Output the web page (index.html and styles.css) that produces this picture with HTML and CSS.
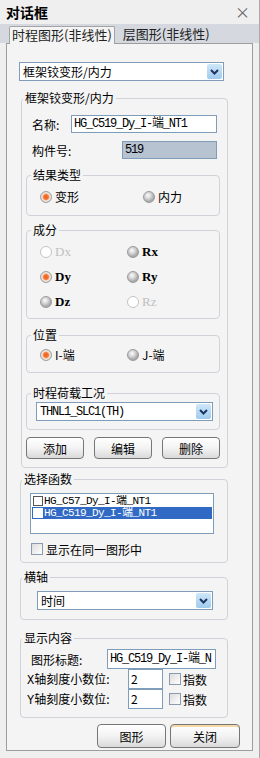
FILE: index.html
```html
<!DOCTYPE html>
<html lang="zh-CN">
<head>
<meta charset="UTF-8">
<meta name="viewport" content="width=device-width,initial-scale=1.0">
<title>对话框</title>
<link rel="stylesheet" href="styles.css">
</head>
<body>
<div class="dlg">
<div class="titlebar"><span class="title">对话框</span><span class="close">×</span></div>
<div class="tabs"><span class="tab active">时程图形(非线性)</span><span class="tab">层图形(非线性)</span></div>
<div class="panel">
<div class="combo main-combo"><span>框架铰变形/内力</span><span class="combo-btn"><svg width="9" height="6" viewBox="0 0 9 6"><path d="M1 1l3.5 3.5L8 1" fill="none" stroke="#1d3560" stroke-width="2"/></svg></span></div>

<fieldset class="group outer">
<legend>框架铰变形/内力</legend>
<div class="field"><label class="lbl name-lbl">名称:</label><span class="edit mono name-edit">HG_C519_Dy_I-端_NT1</span></div>
<div class="field id-field"><label class="lbl id-lbl">构件号:</label><span class="edit mono id-edit">519</span></div>

<fieldset class="group inner result">
<legend>结果类型</legend>
<div class="radios cols-wide">
<span class="opt"><i class="radio on"></i>变形</span>
<span class="opt"><i class="radio"></i>内力</span>
</div>
</fieldset>

<fieldset class="group inner comp">
<legend>成分</legend>
<div class="radios cols">
<span class="opt comp-txt off"><i class="radio dis"></i>Dx</span>
<span class="opt comp-txt"><i class="radio"></i>Rx</span>
<span class="opt comp-txt"><i class="radio on"></i>Dy</span>
<span class="opt comp-txt"><i class="radio"></i>Ry</span>
<span class="opt comp-txt"><i class="radio"></i>Dz</span>
<span class="opt comp-txt off"><i class="radio dis"></i>Rz</span>
</div>
</fieldset>

<fieldset class="group inner pos">
<legend>位置</legend>
<div class="radios cols">
<span class="opt"><i class="radio on"></i>I-端</span>
<span class="opt"><i class="radio"></i>J-端</span>
</div>
</fieldset>

<fieldset class="group inner load">
<legend>时程荷载工况</legend>
<div class="combo load-combo"><span class="mono">THNL1_SLC1(TH)</span><span class="combo-btn"><svg width="9" height="6" viewBox="0 0 9 6"><path d="M1 1l3.5 3.5L8 1" fill="none" stroke="#1d3560" stroke-width="2"/></svg></span></div>
</fieldset>

<div class="btn-row">
<span class="btn">添加</span>
<span class="btn">编辑</span>
<span class="btn">删除</span>
</div>
</fieldset>

<fieldset class="group top func">
<legend>选择函数</legend>
<div class="listbox">
<div class="item mono"><i class="chk small"></i>HG_C57_Dy_I-端_NT1</div>
<div class="item mono sel"><i class="chk small"></i>HG_C519_Dy_I-端_NT1</div>
</div>
<div class="check-row"><i class="chk"></i>显示在同一图形中</div>
</fieldset>

<fieldset class="group top axis">
<legend>横轴</legend>
<div class="combo axis-combo"><span>时间</span><span class="combo-btn"><svg width="9" height="6" viewBox="0 0 9 6"><path d="M1 1l3.5 3.5L8 1" fill="none" stroke="#1d3560" stroke-width="2"/></svg></span></div>
</fieldset>

<fieldset class="group top show">
<legend>显示内容</legend>
<div class="drow"><label class="title-lbl">图形标题:</label><span class="edit mono title-edit">HG_C519_Dy_I-端_N</span></div>
<div class="drow"><label class="dec-lbl"><span class="mono">X</span>轴刻度小数位:</label><span class="edit num-edit">2</span><i class="chk exp"></i>指数</div>
<div class="drow"><label class="dec-lbl"><span class="mono">Y</span>轴刻度小数位:</label><span class="edit num-edit">2</span><i class="chk exp"></i>指数</div>
</fieldset>

<div class="foot">
<span class="btn big">图形</span>
<span class="btn big default">关闭</span>
</div>
</div>
</div>
</body>
</html>
```

FILE: styles.css
```css
*{box-sizing:border-box}
body{margin:0;background:#efefef;font-family:"Noto Sans CJK SC","Noto Sans",sans-serif;font-size:12px;color:#000}
.dlg{width:260px;height:758px;border-right:1px solid #a9a9a9;overflow:hidden}

/* title + tabs */
.titlebar{height:24px;display:flex;align-items:center;justify-content:space-between;padding:0 9px 0 6px}
.title{font-weight:bold;font-size:14px;line-height:16px}
.close{font-size:15px;color:#666;line-height:16px}
.tabs{height:19px;background:#d5d9df;display:flex;align-items:flex-end;padding-left:9px}
.tab{font-size:13px;line-height:16px;height:17px;padding:0 2px;margin-right:6px;color:#222}
.tab.active{position:relative;background:#f4f4f4;border:1px solid #a4a4a4;border-bottom:none;border-radius:2px 2px 0 0;margin-bottom:-1px;height:18px}

.panel{margin-left:6px;width:247px;height:708px;border:1px solid #9d9d9d;background:#f4f4f4;padding:18px 0 0 12px}

/* inputs */
.mono{font-family:"Liberation Mono","Noto Sans CJK SC",monospace;letter-spacing:-1.2px}
.combo{display:flex;align-items:center;justify-content:space-between;height:19px;border:1px solid #7f9db9;background:#fff;padding:0 1px 0 3px;white-space:nowrap}
.combo-btn{width:15px;height:15px;border-radius:2px;background:linear-gradient(#cfe7f9,#9fcbee);display:flex;align-items:center;justify-content:center}
.main-combo{width:205px}
.edit{display:block;height:18px;border:1px solid #7f9db9;background:#fff;padding-left:2px;line-height:16px;white-space:nowrap;overflow:hidden}

/* group boxes */
.group{margin:0;padding:0;border:1px solid #cfd2d8;border-radius:4px;min-width:0}
.group legend{padding:0 2px;margin-left:1px;line-height:14px;font-size:12px}
.inner legend{margin-left:4px}

.outer{margin:10px 0 0 2px;width:207px;padding:10px 0 8px}
.field{display:flex;align-items:center;height:18px}
.id-field{margin-top:8px}
.lbl{padding-left:10px}
.name-lbl{width:49px}
.id-lbl{width:100px}
.name-edit{width:146px}
.id-edit{width:95px;background:#b8c3d2}

.inner{margin-left:4px;width:194px}
.result{margin-top:9px;padding:8px 0 11px}
.comp{margin-top:7px;padding:8px 0 9px}
.pos{margin-top:9px;padding:6px 0 10px}
.load{margin-top:13px;padding:2px 0 8px}
.load-combo{margin-left:9px;width:177px}

.radios{display:grid;margin-left:13px;row-gap:11px}
.cols-wide{grid-template-columns:103px 80px}
.cols{grid-template-columns:87px 87px}
.opt{display:flex;align-items:center;gap:3px;height:14px;line-height:14px}
.comp-txt{font-family:"Liberation Serif",serif;font-weight:bold;font-size:13px}
.off{color:#c0c0c0;font-weight:normal}
.radio{display:block;width:12px;height:12px;border-radius:50%;border:1px solid #9a9a9a;background:radial-gradient(circle at 40% 35%,#fdfdfd 0,#d6d6d6 3px,#a8a8a8 6px)}
.radio.on{border-color:#a0a0a0;background:radial-gradient(circle,#ee5a1e 0,#f27a3c 2.5px,#fcd2b6 3.5px,#e6e6e6 4.5px,#b4b4b4 6px)}
.radio.dis{border-color:#c4c4c4;background:#fff}

.btn-row{display:flex;gap:10px;margin:7px 0 0 4px}
.btn{display:flex;align-items:center;justify-content:center;width:58px;height:22px;border:1px solid #767676;border-radius:4px;background:linear-gradient(#ffffff,#f3f3f3 50%,#dadada)}

/* lower groups */
.top{margin-left:1px;width:208px}
.func{margin-top:4px;padding:7px 0 6px}
.listbox{margin-left:9px;width:184px;height:41px;border:1px solid #7f9db9;background:#fff;padding:1px}
.item{display:flex;align-items:center;gap:1px;height:12px;line-height:12px;font-size:11px;letter-spacing:-0.6px;white-space:nowrap;overflow:hidden}
.item.sel{background:#316ac5;color:#fff}
.chk{display:block;flex:none;width:12px;height:12px;border:1px solid #8a9ab0;background:linear-gradient(135deg,#dcdcdc,#fff)}
.chk.small{width:10px;height:10px;margin-left:1px;border-color:#555;background:#fff}
.sel .chk.small{border-color:#fff}
.check-row{display:flex;align-items:center;gap:3px;height:14px;margin:8px 0 0 10px}

.axis{margin-top:7px;padding:7px 0 9px}
.axis-combo{margin-left:16px;width:176px}

.show{margin-top:11px;padding:4px 0 8px}
.drow{display:flex;align-items:center;height:20px}
.title-lbl{margin-left:10px;width:76px}
.title-edit{width:109px;height:20px;line-height:18px}
.dec-lbl{margin-left:6px;width:101px}
.dec-lbl .mono{letter-spacing:0}
.num-edit{width:35px;height:20px;line-height:18px}
.chk.exp{margin:0 2px 0 6px}

.foot{display:flex;gap:4px;margin:6px 0 0 78px}
.btn.big{height:24px;width:69px}
.btn.default{width:70px;box-shadow:inset 0 2px 0 #f6d9a8}
```
